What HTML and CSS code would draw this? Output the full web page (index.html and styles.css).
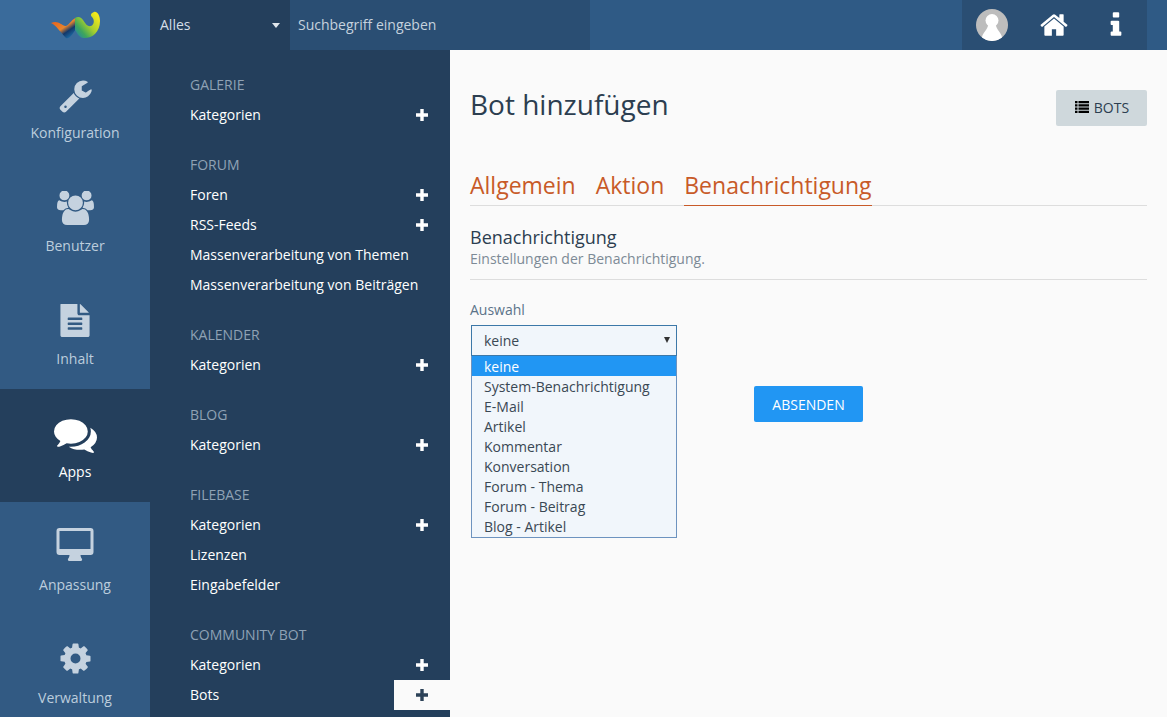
FILE: index.html
```html
<!DOCTYPE html>
<html lang="de">
<head>
  <meta charset="UTF-8" />
  <title>Bot hinzufügen</title>
  <link rel="stylesheet" href="styles.css">
</head>
<body>
  <svg class="sprite" xmlns="http://www.w3.org/2000/svg">
    <symbol id="i-wrench" viewBox="0 0 1792 1792"><path d="M448 1472q0-26-19-45t-45-19-45 19-19 45 19 45 45 19 45-19 19-45zm644-420l-682 682q-37 37-90 37-52 0-91-37l-106-108q-38-36-38-90 0-53 38-91l681-681q39 98 114.5 173.5t173.5 114.5zm634-435q0 39-23 106-47 134-164.5 217.5t-258.5 83.5q-185 0-316.5-131.5t-131.5-316.5 131.5-316.5 316.5-131.5q58 0 121.5 16.5t107.5 46.5q16 11 16 28t-16 28l-293 169v224l193 107q5-3 79-48.5t135.5-81 70.5-35.5q15 0 23.5 10t8.5 25z"/></symbol>
    <symbol id="i-users" viewBox="0 40 1920 1792"><path d="M593 896q-162 5-265 128h-134q-82 0-138-40.5t-56-118.5q0-353 124-353 6 0 43.5 21t97.5 42.5 119 21.5q67 0 133-23-5 37-5 66 0 139 81 256zm1071 637q0 120-73 189.5t-194 69.5h-874q-121 0-194-69.5t-73-189.5q0-53 3.5-103.5t14-109 26.5-108.5 43-97.5 62-81 85.5-53.5 111.5-20q10 0 43 21.5t73 48 107 48 135 21.5 135-21.5 107-48 73-48 43-21.5q61 0 111.5 20t85.5 53.5 62 81 43 97.5 26.5 108.5 14 109 3.5 103.5zm-1024-1277q0 106-75 181t-181 75-181-75-75-181 75-181 181-75 181 75 75 181zm704 384q0 159-112.5 271.5t-271.5 112.5-271.5-112.5-112.5-271.5 112.5-271.5 271.5-112.5 271.5 112.5 112.5 271.5zm576 225q0 78-56 118.5t-138 40.5h-134q-103-123-265-128 81-117 81-256 0-29-5-66 66 23 133 23 59 0 119-21.5t97.5-42.5 43.5-21q124 0 124 353zm-128-609q0 106-75 181t-181 75-181-75-75-181 75-181 181-75 181 75 75 181z"/></symbol>
    <symbol id="i-file" viewBox="0 50 1792 1792"><path d="M1596 476q14 14 28 36h-472v-472q22 14 36 28zm-476 164h544v1056q0 40-28 68t-68 28h-1344q-40 0-68-28t-28-68v-1600q0-40 28-68t68-28h800v544q0 40 28 68t68 28zm160 736v-64q0-14-9-23t-23-9h-704q-14 0-23 9t-9 23v64q0 14 9 23t23 9h704q14 0 23-9t9-23zm0-256v-64q0-14-9-23t-23-9h-704q-14 0-23 9t-9 23v64q0 14 9 23t23 9h704q14 0 23-9t9-23zm0-256v-64q0-14-9-23t-23-9h-704q-14 0-23 9t-9 23v64q0 14 9 23t23 9h704q14 0 23-9t9-23z"/></symbol>
    <symbol id="i-comments" viewBox="0 0 1792 1792"><path d="M1408 768q0 139-94 257t-256.5 186.5-353.5 68.5q-86 0-176-16-124 88-278 128-36 9-86 16h-3q-11 0-20.5-8t-11.5-21q-1-3-1-6.5t.5-6.5 2-6l2.5-5 3.5-5.5 4-5 4.5-5 4-4.5q5-6 23-25t26-29.5 22.5-29 25-38.5 20.5-44q-124-72-195-177t-71-224q0-139 94-257t256.5-186.5 353.5-68.5 353.5 68.5 256.5 186.5 94 257zm384 256q0 120-71 224.5t-195 176.5q10 24 20.5 44t25 38.5 22.5 29 26 29.5 23 25q1 1 4 4.5t4.5 5 4 5 3.5 5.5l2.5 5 2 6 .5 6.5-1 6.5q-3 14-13 22t-22 7q-50-7-86-16-154-40-278-128-90 16-176 16-271 0-472-132 58 4 88 4 161 0 309-45t264-129q125-92 192-212t67-254q0-77-23-152 129 71 204 178t75 230z"/></symbol>
    <symbol id="i-desktop" viewBox="-0.500 0 38 38"><path fill-rule="evenodd" d="M3 0h31a3 3 0 0 1 3 3v21a3 3 0 0 1-3 3H24c0 2 1 3 1.500 4 .4 1-.2 2-1.200 2H12.700c-1 0-1.600-1-1.200-2 .5-1 1.500-2 1.500-4H3a3 3 0 0 1-3-3V3a3 3 0 0 1 3-3zm0 3v18h31V3z"/></symbol>
    <symbol id="i-cog" viewBox="0 102 1792 1792"><path d="M1152 896q0-106-75-181t-181-75-181 75-75 181 75 181 181 75 181-75 75-181zm512-109v222q0 12-8 23t-20 13l-185 28q-19 54-39 91 35 50 107 138 10 12 10 25t-9 23q-27 37-99 108t-94 71q-12 0-26-9l-138-108q-44 23-91 38-16 136-29 186-7 28-36 28h-222q-14 0-24.500-8.500t-11.500-21.500l-28-184q-49-16-90-37l-141 107q-10 9-25 9-14 0-25-11-126-114-165-168-7-10-7-23 0-12 8-23 15-21 51-66.500t54-70.500q-27-50-41-99l-183-27q-13-2-21-12.500t-8-23.500v-222q0-12 8-23t19-13l186-28q14-46 39-92-40-57-107-138-10-12-10-24 0-10 9-23 26-36 98.500-107.500t94.500-71.500q13 0 26 10l138 107q44-23 91-38 16-136 29-186 7-28 36-28h222q14 0 24.500 8.500t11.500 21.500l28 184q49 16 90 37l142-107q9-9 24-9 13 0 25 10 129 119 165 170 7 8 7 22 0 12-8 23-15 21-51 66.500t-54 70.500q26 50 41 98l183 28q13 2 21 12.500t8 23.500z"/></symbol>
    <symbol id="i-home" viewBox="0 0 1792 1792"><path d="M1472 992v480q0 26-19 45t-45 19h-384v-384h-256v384h-384q-26 0-45-19t-19-45v-480q0-1 .5-3t.5-3l575-474 575 474q1 2 1 6zm223-69l-62 74q-8 9-21 11h-3q-13 0-21-7l-692-577-692 577q-12 8-24 7-13-2-21-11l-62-74q-8-10-7-23.500t11-21.500l719-599q32-26 76-26t76 26l244 204v-195q0-14 9-23t23-9h192q14 0 23 9t9 23v408l219 182q10 8 11 21.500t-7 23.500z"/></symbol>
    <symbol id="i-info" viewBox="0 0 1792 1792"><path d="M1216 1344v128q0 26-19 45t-45 19h-512q-26 0-45-19t-19-45v-128q0-26 19-45t45-19h64v-384h-64q-26 0-45-19t-19-45v-128q0-26 19-45t45-19h384q26 0 45 19t19 45v576h64q26 0 45 19t19 45zm-128-1152v192q0 26-19 45t-45 19h-256q-26 0-45-19t-19-45v-192q0-26 19-45t45-19h256q26 0 45 19t19 45z"/></symbol>
    <symbol id="i-plus" viewBox="0 0 12 12"><path d="M4.300 0h3.400v4.300H12v3.400H7.700V12H4.300V7.700H0V4.300h4.300z"/></symbol>
    <symbol id="i-list" viewBox="0 0 14 12"><path d="M0 0h2.500v2.200H0zM3.500 0H14v2.200H3.500zM0 3.200h2.500v2.200H0zM3.500 3.200H14v2.200H3.500zM0 6.500h2.500v2.200H0zM3.500 6.500H14v2.200H3.500zM0 9.800h2.500V12H0zM3.500 9.800H14V12H3.500z"/></symbol>
  </svg>

  <header class="topbar">
    <div class="logo">
      <svg width="50" height="30" viewBox="0 0 50 30">
        <defs>
          <linearGradient id="logo-left" gradientUnits="userSpaceOnUse" x1="6" y1="8" x2="20" y2="28">
            <stop offset="0" stop-color="#e8601c"/>
            <stop offset="0.5" stop-color="#e8842c"/>
            <stop offset="0.72" stop-color="#12386a"/>
            <stop offset="1" stop-color="#1d6ea8"/>
          </linearGradient>
          <linearGradient id="logo-right" gradientUnits="userSpaceOnUse" x1="22" y1="24" x2="46" y2="4">
            <stop offset="0" stop-color="#1d7cb8"/>
            <stop offset="0.3" stop-color="#3ea65c"/>
            <stop offset="0.6" stop-color="#a6cf2e"/>
            <stop offset="1" stop-color="#f4e81c"/>
          </linearGradient>
        </defs>
        <path d="M1 13C6 15 11 23 16 28C19 29.500 22 25 25.300 20L25.300 8C21 10 18 17 15 16C11 15 8 10 1 13Z" fill="url(#logo-left)"/>
        <path d="M25 20C27 22 28 27 33 28C41 29 50 23 50 11C50 5 47 1 44 2C41 3 40 5 42 7C45 10 44 15 41 16C37 17 35 13 33 10C31 7 28 6 25 8Z" fill="url(#logo-right)"/>
      </svg>
    </div>
    <div class="search-type">
      <span>Alles</span>
      <span class="caret"></span>
    </div>
    <div class="search-input">Suchbegriff eingeben</div>
    <div class="user-tools">
      <span class="avatar">
        <svg width="32" height="32" viewBox="0 0 32 32"><circle cx="16" cy="16" r="16" fill="#bdbdbd"/><circle cx="16" cy="11.500" r="6.500" fill="#fff"/><path d="M12.500 15h7c1 6 6 9 6.500 13.500a16 16 0 0 1-20 0C6.500 24 11.500 21 12.500 15z" fill="#fff"/></svg>
      </span>
      <svg class="tool-icon" width="30" height="30"><use href="#i-home"/></svg>
      <svg class="tool-icon" width="30" height="30"><use href="#i-info"/></svg>
    </div>
  </header>

  <div class="layout">
    <nav class="rail">
      <a class="rail-item"><div class="rail-icon"><svg width="35" height="35"><use href="#i-wrench"/></svg></div><span>Konfiguration</span></a>
      <a class="rail-item"><div class="rail-icon"><svg width="37" height="35"><use href="#i-users"/></svg></div><span>Benutzer</span></a>
      <a class="rail-item"><div class="rail-icon"><svg width="34" height="34"><use href="#i-file"/></svg></div><span>Inhalt</span></a>
      <a class="rail-item active"><div class="rail-icon"><svg width="43" height="43"><use href="#i-comments"/></svg></div><span>Apps</span></a>
      <a class="rail-item"><div class="rail-icon"><svg width="38" height="38"><use href="#i-desktop"/></svg></div><span>Anpassung</span></a>
      <a class="rail-item"><div class="rail-icon"><svg width="35" height="35"><use href="#i-cog"/></svg></div><span>Verwaltung</span></a>
    </nav>

    <nav class="submenu">
      <div class="menu-group">
        <h3>Galerie</h3>
        <a class="menu-row">Kategorien<svg class="plus"><use href="#i-plus"/></svg></a>
      </div>
      <div class="menu-group">
        <h3>Forum</h3>
        <a class="menu-row">Foren<svg class="plus"><use href="#i-plus"/></svg></a>
        <a class="menu-row">RSS-Feeds<svg class="plus"><use href="#i-plus"/></svg></a>
        <a class="menu-row">Massenverarbeitung von Themen</a>
        <a class="menu-row">Massenverarbeitung von Beiträgen</a>
      </div>
      <div class="menu-group">
        <h3>Kalender</h3>
        <a class="menu-row">Kategorien<svg class="plus"><use href="#i-plus"/></svg></a>
      </div>
      <div class="menu-group">
        <h3>Blog</h3>
        <a class="menu-row">Kategorien<svg class="plus"><use href="#i-plus"/></svg></a>
      </div>
      <div class="menu-group">
        <h3>Filebase</h3>
        <a class="menu-row">Kategorien<svg class="plus"><use href="#i-plus"/></svg></a>
        <a class="menu-row">Lizenzen</a>
        <a class="menu-row">Eingabefelder</a>
      </div>
      <div class="menu-group">
        <h3>Community Bot</h3>
        <a class="menu-row">Kategorien<svg class="plus"><use href="#i-plus"/></svg></a>
        <a class="menu-row">Bots<span class="plus-box"><svg class="plus"><use href="#i-plus"/></svg></span></a>
      </div>
    </nav>

    <main class="content">
      <div class="page-head">
        <h1>Bot hinzufügen</h1>
        <a class="btn-bots"><svg width="14" height="12"><use href="#i-list"/></svg>BOTS</a>
      </div>

      <div class="tabs">
        <a class="tab">Allgemein</a>
        <a class="tab">Aktion</a>
        <a class="tab active">Benachrichtigung</a>
      </div>

      <section class="section-head">
        <h2>Benachrichtigung</h2>
        <p>Einstellungen der Benachrichtigung.</p>
      </section>

      <div class="field">
        <label>Auswahl</label>
        <div class="select">
          <div class="select-value">keine<span class="select-arrow"></span></div>
          <ul class="select-list">
            <li class="selected">keine</li>
            <li>System-Benachrichtigung</li>
            <li>E-Mail</li>
            <li>Artikel</li>
            <li>Kommentar</li>
            <li>Konversation</li>
            <li>Forum - Thema</li>
            <li>Forum - Beitrag</li>
            <li>Blog - Artikel</li>
          </ul>
        </div>
      </div>

      <div class="form-submit">
        <button>ABSENDEN</button>
      </div>
    </main>
  </div>
</body>
</html>
```

FILE: styles.css
```css
* {
  box-sizing: border-box;
}
html, body {
  height: 100%;
}
body {
  margin: 0;
  overflow: hidden;
  font-family: "Open Sans", sans-serif;
  font-size: 14px;
  background: #fafafa;
}
a {
  text-decoration: none;
}
.sprite {
  display: none;
}

/* top bar */
.topbar {
  display: flex;
  height: 50px;
  background: #2f5a85;
}
.logo {
  width: 150px;
  display: flex;
  align-items: center;
  justify-content: center;
  background: #3a6b9b;
}
.search-type {
  width: 140px;
  padding: 0 10px 2px 10px;
  display: flex;
  align-items: center;
  justify-content: space-between;
  color: #d5dee7;
  background: #243f5c;
}
.caret {
  margin-top: 2px;
  border-left: 4.5px solid transparent;
  border-right: 4.5px solid transparent;
  border-top: 5px solid #e0e6ec;
}
.search-input {
  width: 300px;
  padding: 0 8px;
  line-height: 50px;
  color: #c6d2de;
  background: #2a4e73;
}
.user-tools {
  width: 185px;
  margin-left: auto;
  margin-right: 20px;
  display: flex;
  align-items: center;
  background: #2a4e73;
}
.avatar {
  width: 32px;
  height: 32px;
  margin-left: 14px;
}
.avatar svg {
  display: block;
}
.tool-icon {
  fill: #fff;
}
.tool-icon:nth-child(2) {
  margin-left: 31px;
}
.tool-icon:nth-child(3) {
  margin-left: 32px;
}

/* left rail */
.layout {
  display: flex;
  height: calc(100% - 50px);
}
.rail {
  width: 150px;
  flex: none;
  background: #325a83;
}
.rail-item {
  height: 113px;
  display: flex;
  flex-direction: column;
  align-items: center;
  color: #bccddd;
}
.rail-icon {
  height: 38px;
  margin-top: 26px;
  margin-bottom: 9px;
  display: flex;
  align-items: center;
  justify-content: center;
}
.rail-icon svg {
  fill: #c5d2df;
}
.rail-item span {
  line-height: 20px;
}
.rail-item.active {
  color: #fff;
  background: #243f5c;
}
.rail-item.active svg {
  fill: #fff;
}

/* sub menu */
.submenu {
  width: 300px;
  flex: none;
  padding-top: 20px;
  background: #243f5c;
}
.menu-group {
  margin-bottom: 20px;
}
.menu-group h3 {
  margin: 0;
  padding-left: 40px;
  font-size: 14px;
  font-weight: 400;
  line-height: 30px;
  text-transform: uppercase;
  color: #8fa2b5;
}
.menu-row {
  display: block;
  position: relative;
  padding-left: 40px;
  line-height: 30px;
  color: #fff;
}
.plus {
  position: absolute;
  right: 22px;
  top: 9px;
  width: 12px;
  height: 12px;
  fill: #fff;
}
.plus-box {
  position: absolute;
  right: 0;
  top: 0;
  width: 56px;
  height: 30px;
  background: #fafafa;
}
.plus-box .plus {
  fill: #2c4258;
}

/* content */
.content {
  flex: 1;
  padding: 0 20px;
  background: #fafafa;
}
.page-head {
  height: 76px;
  padding-top: 40px;
  display: flex;
  justify-content: space-between;
  align-items: flex-start;
}
.page-head h1 {
  margin: -1px 0 0;
  font-size: 28px;
  font-weight: 400;
  line-height: 30px;
  color: #2c3e50;
}
.btn-bots {
  width: 91px;
  height: 36px;
  padding: 0 0 2px 1px;
  display: flex;
  align-items: center;
  justify-content: center;
  gap: 5px;
  border-radius: 2px;
  background: #cfd8dc;
  color: #2c3e50;
}
.tabs {
  display: flex;
  gap: 20px;
  margin-top: 40px;
  border-bottom: 1px solid #ddd;
}
.tab {
  font-size: 23px;
  line-height: 38px;
  color: #c85a28;
  margin-bottom: -1px;
  height: 40px;
}
.tab.active {
  border-bottom: 1px solid #c85a28;
}
.section-head {
  margin-top: 19px;
  padding-bottom: 11px;
  border-bottom: 1px solid #ddd;
}
.section-head h2 {
  margin: 0 0 1px;
  font-size: 18px;
  font-weight: 400;
  line-height: 24px;
  color: #2c3e50;
}
.section-head p {
  margin: 0;
  line-height: 18px;
  color: #7d8a96;
}
.field {
  margin-top: 20px;
}
.field label {
  display: block;
  line-height: 20px;
  color: #5b7389;
}
.select {
  position: relative;
  width: 206px;
  margin: 5px 0 0 1px;
}
.select-value {
  height: 31px;
  padding: 0 12px;
  line-height: 30px;
  color: #3a4854;
  background: #f1f6fb;
  border: 1px solid #3c78a8;
}
.select-arrow {
  position: absolute;
  right: 7px;
  top: 12px;
  border-left: 3px solid transparent;
  border-right: 3px solid transparent;
  border-top: 6px solid #333;
}
.select-list {
  position: absolute;
  left: 0;
  right: 0;
  top: 31px;
  margin: 0;
  padding: 0 0 1px;
  list-style: none;
  background: #f1f6fb;
  border: 1px solid #6d93bf;
  border-top: 0;
  color: #3a4854;
}
.select-list li {
  height: 20px;
  padding-left: 12px;
  line-height: 22px;
}
.select-list .selected {
  color: #fff;
  background: #2196f3;
}
.form-submit {
  margin-top: 30px;
  text-align: center;
}
.form-submit button {
  width: 109px;
  height: 36px;
  border: 0;
  border-radius: 2px;
  font-family: inherit;
  font-size: 14px;
  color: #fff;
  background: #2196f3;
}
```
